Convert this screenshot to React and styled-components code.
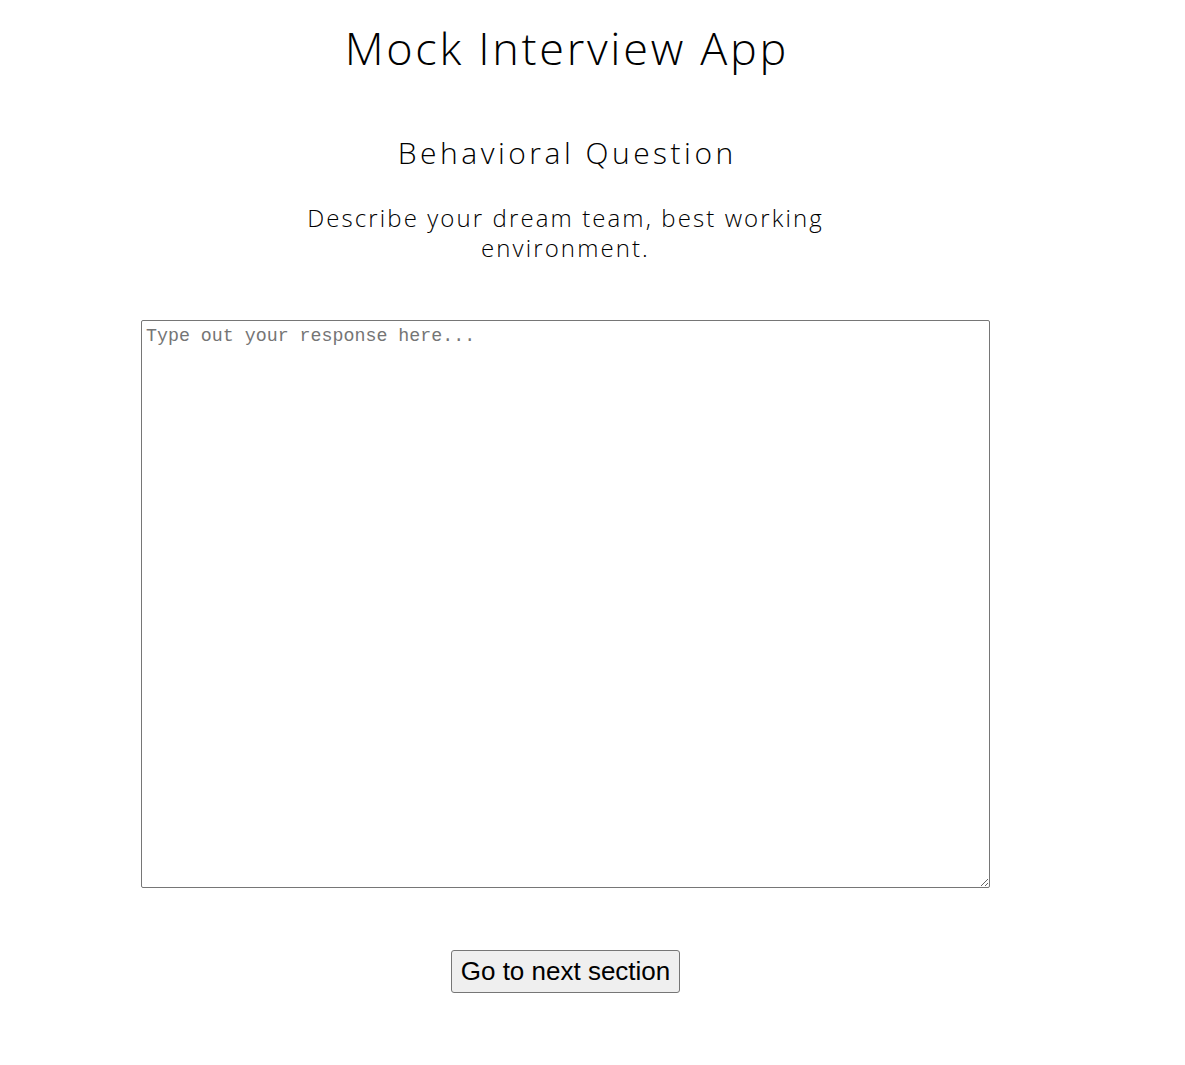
import React from "react";
import styled, { createGlobalStyle } from "styled-components";

const GlobalStyle = createGlobalStyle`
  html, body { margin: 0; padding: 0; background: #ffffff; }
  body { font-family: "Open Sans", "Liberation Sans", sans-serif; color: #000; }
`;

const Page = styled.main`
  width: 1131px;
  padding-top: 20px;
  display: flex;
  flex-direction: column;
  align-items: center;
  text-align: center;
`;

const Title = styled.h1`
  margin: 0;
  font-size: 45px;
  line-height: 56px;
  font-weight: 300;
  letter-spacing: 2.7px;
  text-indent: 2.7px;
`;

const Section = styled.section`
  display: flex;
  flex-direction: column;
  align-items: center;
  margin-top: 57px;
`;

const Heading = styled.h2`
  margin: 0;
  font-size: 30px;
  line-height: 40px;
  font-weight: 300;
  letter-spacing: 3.5px;
  text-indent: 3.5px;
`;

const Prompt = styled.p`
  margin: 30px 0 0;
  max-width: 560px;
  font-size: 24px;
  line-height: 30px;
  font-weight: 300;
  letter-spacing: 2.1px;
`;

const Response = styled.textarea`
  box-sizing: border-box;
  margin-top: 57px;
  width: 849px;
  height: 568px;
  padding: 5px 2px 2px 4px;
  border: 1px solid #767676;
  border-radius: 2px;
  font-family: "Liberation Mono", "Courier New", monospace;
  font-size: 18.3px;
  line-height: 1.15;
  color: #000;
  &::placeholder { color: #757575; }
`;

const NextButton = styled.button`
  margin-top: 62px;
  box-sizing: border-box;
  height: 43px;
  padding: 0 9px;
  font-family: "Liberation Sans", Arial, sans-serif;
  font-size: 26px;
  color: #000;
  background: #efefef;
  border: 1px solid #767676;
  border-radius: 3px;
  cursor: pointer;
`;

export default function App() {
  return (
    <>
      <GlobalStyle />
      <Page>
        <Title>Mock Interview App</Title>
        <Section>
          <Heading>Behavioral Question</Heading>
          <Prompt>Describe your dream team, best working environment.</Prompt>
          <Response placeholder="Type out your response here..." />
          <NextButton type="button">Go to next section</NextButton>
        </Section>
      </Page>
    </>
  );
}
